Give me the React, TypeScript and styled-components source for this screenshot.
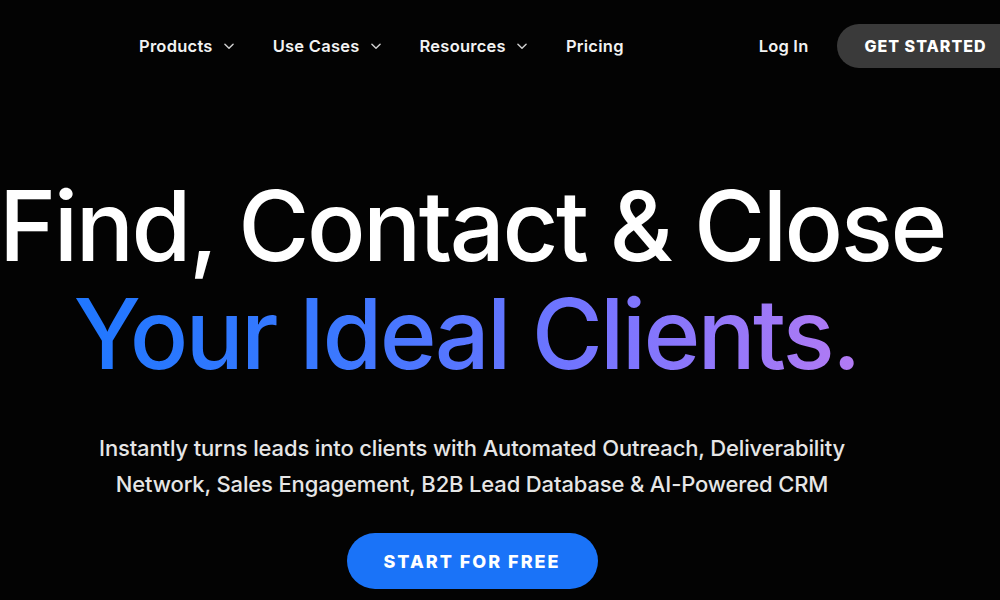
import React from "react";
import styled, { createGlobalStyle } from "styled-components";

const Global = createGlobalStyle`
  html, body { margin: 0; padding: 0; background: #030303; overflow: hidden; }
  body { font-family: "Inter", "Liberation Sans", sans-serif; color: #fff; }
  * { box-sizing: border-box; }
`;

const Page = styled.div`
  width: 1000px;
  height: 600px;
  background: #030303;
  overflow: hidden;
  display: flex;
  flex-direction: column;
`;

const Nav = styled.nav`
  height: 92px;
  display: flex;
  align-items: center;
  padding-left: 139px;
  width: 1060px;
  flex-shrink: 0;
`;

const Menu = styled.ul`
  list-style: none;
  margin: 0;
  padding: 0;
  display: flex;
  align-items: center;
  gap: 37px;
`;

const MenuItem = styled.li`
  display: flex;
  align-items: center;
  gap: 9px;
  font-size: 16.5px;
  font-weight: 600;
  color: #f2f2f2;
  letter-spacing: 0.25px;
`;

const Right = styled.div`
  margin-left: 135px;
  display: flex;
  align-items: center;
  gap: 29px;
`;

const Login = styled.span`
  font-size: 16.5px;
  font-weight: 600;
  color: #f2f2f2;
  letter-spacing: 0.2px;
`;

const GetStarted = styled.button`
  height: 44px;
  padding: 0 40px 0 27px;
  border: none;
  border-radius: 22px;
  background: #3a3a3a;
  color: #fff;
  font-family: inherit;
  font-size: 16px;
  font-weight: 800;
  letter-spacing: 1px;
  white-space: nowrap;
`;

const Hero = styled.main`
  width: 944px;
  display: flex;
  flex-direction: column;
  align-items: center;
  padding-top: 80px;
`;

const Title = styled.h1`
  margin: 0;
  font-size: 97px;
  font-weight: 500;
  line-height: 108px;
  letter-spacing: -2.5px;
  white-space: nowrap;
  text-align: center;
`;

const Line = styled.span<{ $gradient?: boolean }>`
  display: block;
  ${(p) =>
    p.$gradient
      ? `letter-spacing: -2.8px;
         padding-right: 12px;
         background: linear-gradient(90deg, #1877ff 0%, #3a78ff 35%, #7474ff 62%, #c77df0 100%);
         -webkit-background-clip: text; background-clip: text; color: transparent;`
      : `color: #ffffff;`}
`;

const Sub = styled.p`
  margin: 42px 0 0;
  font-size: 22px;
  font-weight: 500;
  line-height: 36px;
  color: #e6e6e6;
  text-align: center;
  letter-spacing: -0.15px;
  white-space: nowrap;
`;

const Cta = styled.button`
  margin-top: 31px;
  width: 251px;
  height: 56px;
  border: none;
  border-radius: 28px;
  background: #1a73f8;
  color: #fff;
  font-family: inherit;
  font-size: 18px;
  font-weight: 800;
  letter-spacing: 2px;
`;

const Chevron = () => (
  <svg width="14" height="14" viewBox="0 0 24 24" fill="none" stroke="#cfcfcf" strokeWidth="2.5" strokeLinecap="round" strokeLinejoin="round">
    <path d="M5 9l7 7 7-7" />
  </svg>
);

export default function App() {
  return (
    <Page>
      <Global />
      <Nav>
        <Menu>
          <MenuItem>Products <Chevron /></MenuItem>
          <MenuItem>Use Cases <Chevron /></MenuItem>
          <MenuItem>Resources <Chevron /></MenuItem>
          <MenuItem>Pricing</MenuItem>
        </Menu>
        <Right>
          <Login>Log In</Login>
          <GetStarted>GET STARTED</GetStarted>
        </Right>
      </Nav>
      <Hero>
        <Title>
          <Line>Find, Contact &amp; Close</Line>
          <Line $gradient>Your Ideal Clients.</Line>
        </Title>
        <Sub>
          Instantly turns leads into clients with Automated Outreach, Deliverability
          <br />
          Network, Sales Engagement, B2B Lead Database &amp; AI-Powered CRM
        </Sub>
        <Cta>START FOR FREE</Cta>
      </Hero>
    </Page>
  );
}
